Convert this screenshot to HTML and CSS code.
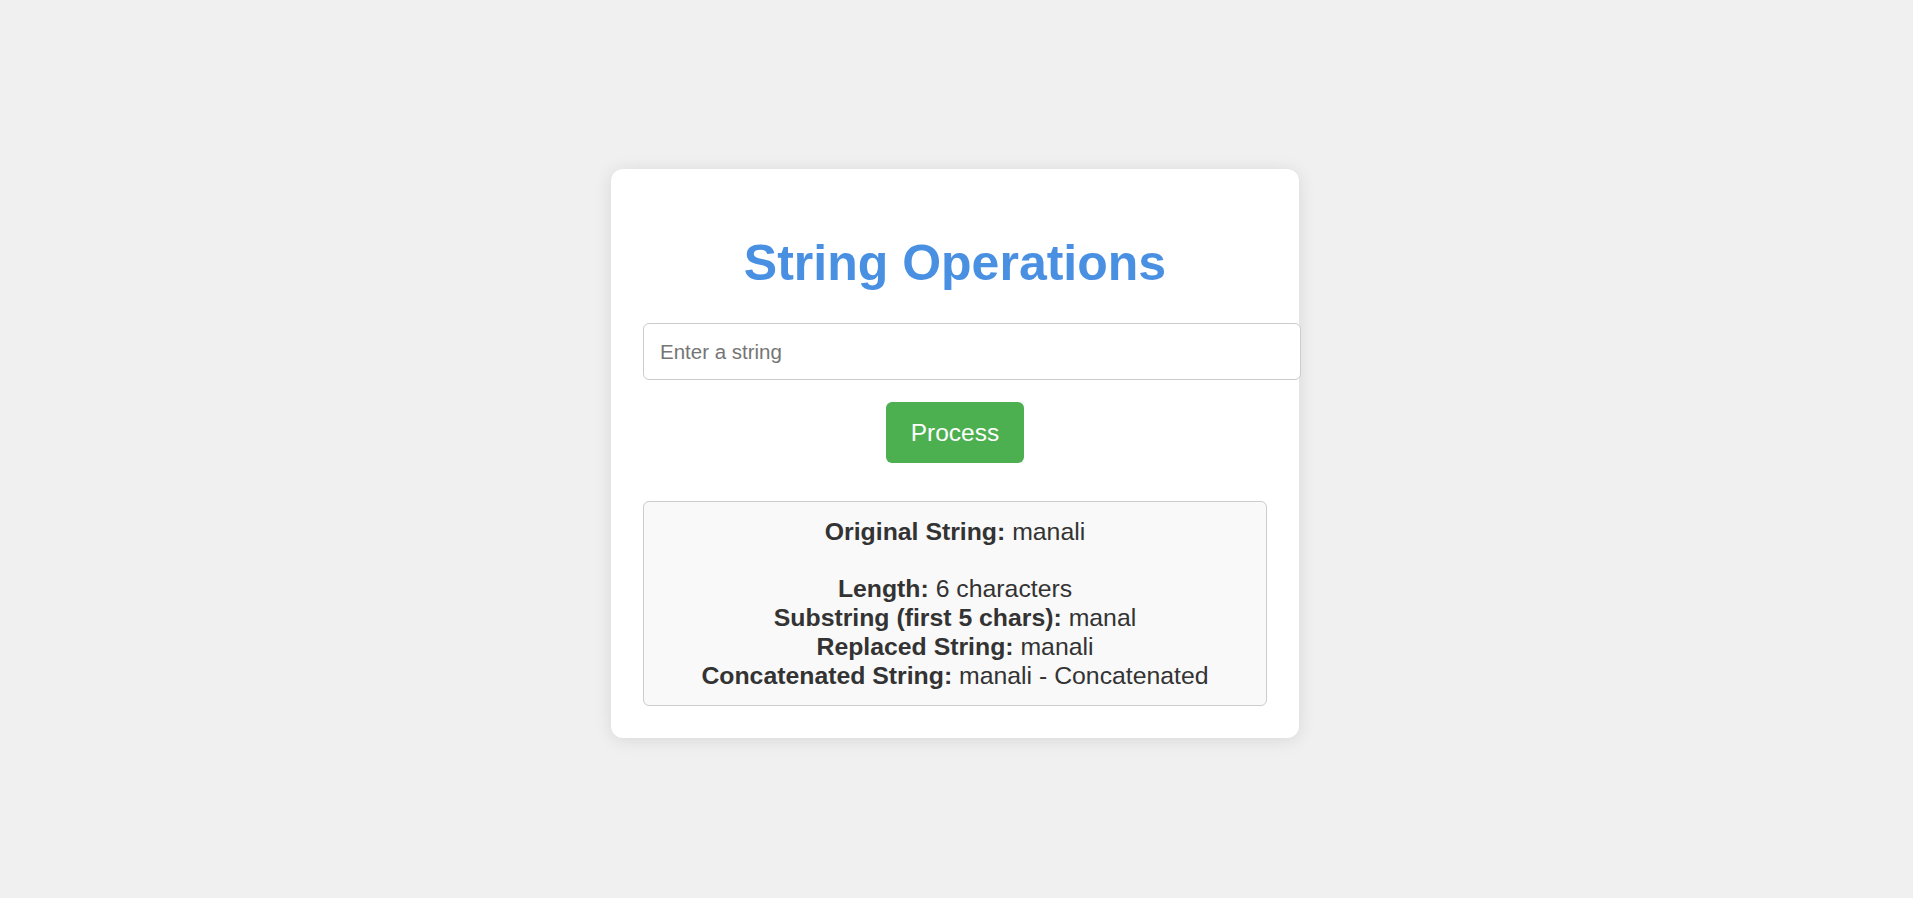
FILE: index.html
```html
<!DOCTYPE html>
<html lang="en">
<head>
<meta charset="utf-8">
<title>String Operations</title>
<link rel="stylesheet" href="styles.css">
</head>
<body>
<main class="page">
  <section class="card">
    <h1 class="title">String Operations</h1>
    <input class="text-input" type="text" placeholder="Enter a string">
    <div class="actions">
      <button class="btn" type="button">Process</button>
    </div>
    <div class="result">
      <div class="line"><strong>Original String:</strong> manali</div>
      <div class="line blank">&nbsp;</div>
      <div class="line"><strong>Length:</strong> 6 characters</div>
      <div class="line"><strong>Substring (first 5 chars):</strong> manal</div>
      <div class="line"><strong>Replaced String:</strong> manali</div>
      <div class="line"><strong>Concatenated String:</strong> manali - Concatenated</div>
    </div>
  </section>
</main>
</body>
</html>
```
FILE: styles.css
```css
html, body {
  margin: 0;
  padding: 0;
}
body {
  background: #f0f0f0;
  font-family: "Liberation Sans", Arial, sans-serif;
  color: #333;
}
.page {
  min-height: 898px;
  display: flex;
  justify-content: center;
  align-items: flex-start;
  padding: 169px 3px 0 0;
  box-sizing: border-box;
}
.card {
  width: 624px;
  padding: 32px;
  background: #fff;
  border-radius: 12px;
  box-shadow: 0 2px 18px rgba(0, 0, 0, 0.1);
  display: flex;
  flex-direction: column;
}
.title {
  margin: 33px 0 31px;
  font-size: 50px;
  font-weight: bold;
  color: #4a90e2;
  text-align: center;
  line-height: normal;
}
.text-input {
  width: 625px;
  height: 55px;
  padding: 0 15px 0 16px;
  margin: 0;
  border: 1px solid #ccc;
  border-radius: 6px;
  font-family: "Liberation Sans", Arial, sans-serif;
  font-size: 20.5px;
  color: #333;
  background: #fff;
  box-sizing: content-box;
  outline: none;
  align-self: flex-start;
}
.text-input::placeholder {
  color: #757575;
}
.actions {
  display: flex;
  justify-content: center;
  margin-top: 22px;
}
.btn {
  width: 138px;
  height: 61px;
  padding: 0;
  border: none;
  border-radius: 6px;
  background: #4caf50;
  color: #fff;
  font-family: "Liberation Sans", Arial, sans-serif;
  font-size: 24.5px;
  cursor: pointer;
}
.result {
  margin-top: 38px;
  padding: 16px 10px 15px;
  border: 1px solid #ccc;
  border-radius: 6px;
  background: #f9f9f9;
  text-align: center;
  font-size: 24.8px;
  line-height: 28.7px;
  color: #333;
}
.result strong {
  font-weight: bold;
}
```
